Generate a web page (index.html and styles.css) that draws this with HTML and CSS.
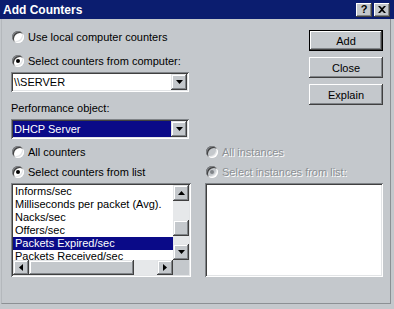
FILE: index.html
```html
<!DOCTYPE html>
<html lang="en">
<head>
  <meta charset="UTF-8" />
  <title>Add Counters</title>
  <link rel="stylesheet" href="styles.css">
</head>
<body>
  <div class="window">
    <div class="titlebar">
      <span class="title">Add Counters</span>
      <div class="caption-buttons">
        <button class="cap-btn help">?</button>
        <button class="cap-btn close">
          <svg width="8" height="7" viewBox="0 0 8 7"><path d="M0 0h2l2 2 2-2h2L5 3.5 8 7H6L4 5 2 7H0l3-3.5z" fill="#000"/></svg>
        </button>
      </div>
    </div>

    <div class="content">
      <div class="top-row">
        <div class="column computer">
          <label class="radio"><span class="dot"></span>Use local computer counters</label>
          <label class="radio checked spaced"><span class="dot"></span>Select counters from computer:</label>
          <div class="combo">
            <span class="combo-text">\\SERVER</span>
            <span class="arrow-btn"><svg width="7" height="4" viewBox="0 0 7 4"><path d="M0 0h7L3.5 4z" fill="#000"/></svg></span>
          </div>
          <div class="field-label">Performance object:</div>
          <div class="combo selected">
            <span class="combo-text">DHCP Server</span>
            <span class="arrow-btn"><svg width="7" height="4" viewBox="0 0 7 4"><path d="M0 0h7L3.5 4z" fill="#000"/></svg></span>
          </div>
        </div>

        <div class="buttons">
          <button class="btn default">Add</button>
          <button class="btn">Close</button>
          <button class="btn">Explain</button>
        </div>
      </div>

      <div class="bottom-row">
        <div class="column counters">
          <label class="radio"><span class="dot"></span>All counters</label>
          <label class="radio checked gap"><span class="dot"></span>Select counters from list</label>
          <div class="listbox">
            <div class="list-main">
              <ul class="items">
                <li>Informs/sec</li>
                <li>Milliseconds per packet (Avg).</li>
                <li>Nacks/sec</li>
                <li>Offers/sec</li>
                <li class="selected">Packets Expired/sec</li>
                <li>Packets Received/sec</li>
              </ul>
              <div class="vscroll">
                <span class="arrow-btn"><svg width="7" height="4" viewBox="0 0 7 4"><path d="M0 4h7L3.5 0z" fill="#000"/></svg></span>
                <div class="track vertical"><span class="thumb"></span></div>
                <span class="arrow-btn"><svg width="7" height="4" viewBox="0 0 7 4"><path d="M0 0h7L3.5 4z" fill="#000"/></svg></span>
              </div>
            </div>
            <div class="hscroll-row">
              <div class="hscroll">
                <span class="arrow-btn"><svg width="4" height="7" viewBox="0 0 4 7"><path d="M4 0v7L0 3.5z" fill="#000"/></svg></span>
                <span class="thumb"></span>
                <div class="track"></div>
                <span class="arrow-btn"><svg width="4" height="7" viewBox="0 0 4 7"><path d="M0 0v7l4-3.5z" fill="#000"/></svg></span>
              </div>
              <span class="corner"></span>
            </div>
          </div>
        </div>

        <div class="column instances disabled">
          <label class="radio"><span class="dot"></span>All instances</label>
          <label class="radio checked gap"><span class="dot"></span>Select instances from list:</label>
          <div class="listbox empty"></div>
        </div>
      </div>
    </div>
  </div>
</body>
</html>
```

FILE: styles.css
```css
:root {
  --face: #c4c8cc;
  --shadow: #808488;
  --dark: #404040;
  --light: #e2e4e6;
  --title: #0b1d6f;
  --select: #0a0a88;
}

body {
  margin: 0;
  background: var(--face);
  font-family: "Liberation Sans", Arial, sans-serif;
  font-size: 11px;
  color: #000;
}

.window {
  width: 394px;
  height: 309px;
  display: flex;
  flex-direction: column;
}

.titlebar {
  height: 19px;
  background: var(--title);
  display: flex;
  align-items: center;
  justify-content: space-between;
  padding: 0 4px 0 3px;
  flex-shrink: 0;
}

.title {
  color: #fff;
  font-weight: bold;
  font-size: 12px;
}

.caption-buttons {
  display: flex;
  gap: 2px;
}

.cap-btn {
  width: 16px;
  height: 14px;
  padding: 0;
  border: none;
  background: var(--face);
  box-shadow: inset -1px -1px var(--dark), inset 1px 1px #fff, inset -2px -2px var(--shadow);
  display: flex;
  align-items: center;
  justify-content: center;
  font-family: "Liberation Sans", Arial, sans-serif;
  font-weight: bold;
  font-size: 11px;
  line-height: 1;
}

.content {
  flex: 1;
  margin: 0 3px 5px 1px;
  padding: 11px 7px 0 9px;
  border: 1px solid;
  border-top: none;
  border-color: #b4b8bc #8c9094 #8c9094 #b4b8bc;
}

.top-row {
  display: flex;
  justify-content: space-between;
}

.column {
  display: flex;
  flex-direction: column;
}

.computer {
  width: 178px;
}

.radio {
  display: flex;
  align-items: center;
  gap: 4px;
  height: 14px;
  white-space: nowrap;
}

.radio .dot {
  width: 12px;
  height: 12px;
  margin-left: 1px;
  border-radius: 50%;
  background: #fff;
  box-shadow: inset 1px 1px var(--shadow), inset -1px -1px #fff, inset 2px 2px var(--dark), inset -2px -2px var(--light);
  display: flex;
  align-items: center;
  justify-content: center;
  flex-shrink: 0;
}

.radio.checked .dot::after {
  content: "";
  width: 4px;
  height: 4px;
  border-radius: 50%;
  background: #000;
}

.radio.spaced {
  margin-top: 10px;
}

.radio.gap {
  margin-top: 6px;
}

.combo {
  margin-top: 4px;
  height: 20px;
  box-sizing: border-box;
  padding: 2px;
  background: #fff;
  box-shadow: inset 1px 1px var(--shadow), inset -1px -1px #fff, inset 2px 2px var(--dark), inset -2px -2px var(--light);
  display: flex;
}

.combo-text {
  flex: 1;
  padding-left: 1px;
  line-height: 16px;
}

.combo.selected .combo-text {
  background: var(--select);
  color: #fff;
}

.arrow-btn {
  width: 16px;
  height: 16px;
  box-sizing: border-box;
  background: var(--face);
  box-shadow: inset -1px -1px var(--dark), inset 1px 1px var(--light), inset -2px -2px var(--shadow), inset 2px 2px #fff;
  display: flex;
  align-items: center;
  justify-content: center;
  flex-shrink: 0;
}

.field-label {
  margin-top: 9px;
  height: 14px;
  line-height: 14px;
}

.buttons {
  width: 74px;
  display: flex;
  flex-direction: column;
  gap: 6px;
}

.btn {
  height: 21px;
  padding: 0;
  border: none;
  background: var(--face);
  box-shadow: inset -1px -1px var(--dark), inset 1px 1px #fff, inset -2px -2px var(--shadow);
  font: inherit;
  color: #000;
}

.btn.default {
  box-shadow: inset 0 0 0 1px #000, inset -2px -2px var(--dark), inset 2px 2px #fff, inset -3px -3px var(--shadow);
}

.bottom-row {
  display: flex;
  gap: 14px;
  margin-top: 6px;
}

.counters {
  width: 180px;
}

.instances {
  width: 178px;
}

.listbox {
  margin-top: 4px;
  height: 94px;
  box-sizing: border-box;
  padding: 2px;
  background: #fff;
  box-shadow: inset 1px 1px var(--shadow), inset -1px -1px #fff, inset 2px 2px var(--dark), inset -2px -2px var(--light);
  display: flex;
  flex-direction: column;
  overflow: hidden;
}

.list-main {
  display: flex;
  height: 75px;
}

.items {
  list-style: none;
  margin: 0;
  padding: 0;
  flex: 1;
  overflow: hidden;
}

.items li {
  height: 13px;
  line-height: 13px;
  padding-left: 2px;
  white-space: nowrap;
}

.items li.selected {
  background: var(--select);
  color: #fff;
}

.vscroll {
  width: 16px;
  display: flex;
  flex-direction: column;
}

.track {
  flex: 1;
  background: #e6e8ea;
}

.track.vertical {
  display: flex;
  flex-direction: column;
  padding-top: 19px;
}

.thumb {
  display: block;
  width: 16px;
  height: 16px;
  box-sizing: border-box;
  background: var(--face);
  box-shadow: inset -1px -1px var(--dark), inset 1px 1px var(--light), inset -2px -2px var(--shadow), inset 2px 2px #fff;
}

.hscroll-row {
  display: flex;
  height: 15px;
}

.hscroll {
  flex: 1;
  display: flex;
  background: #e6e8ea;
}

.hscroll .arrow-btn {
  height: 15px;
}

.hscroll .thumb {
  width: 105px;
  height: 15px;
}

.corner {
  width: 16px;
  background: var(--face);
}

.disabled .radio {
  color: #8c9094;
  text-shadow: 1px 1px #fff;
}

.disabled .radio .dot {
  background: var(--face);
}

.disabled .radio.checked .dot::after {
  background: var(--shadow);
}
```
